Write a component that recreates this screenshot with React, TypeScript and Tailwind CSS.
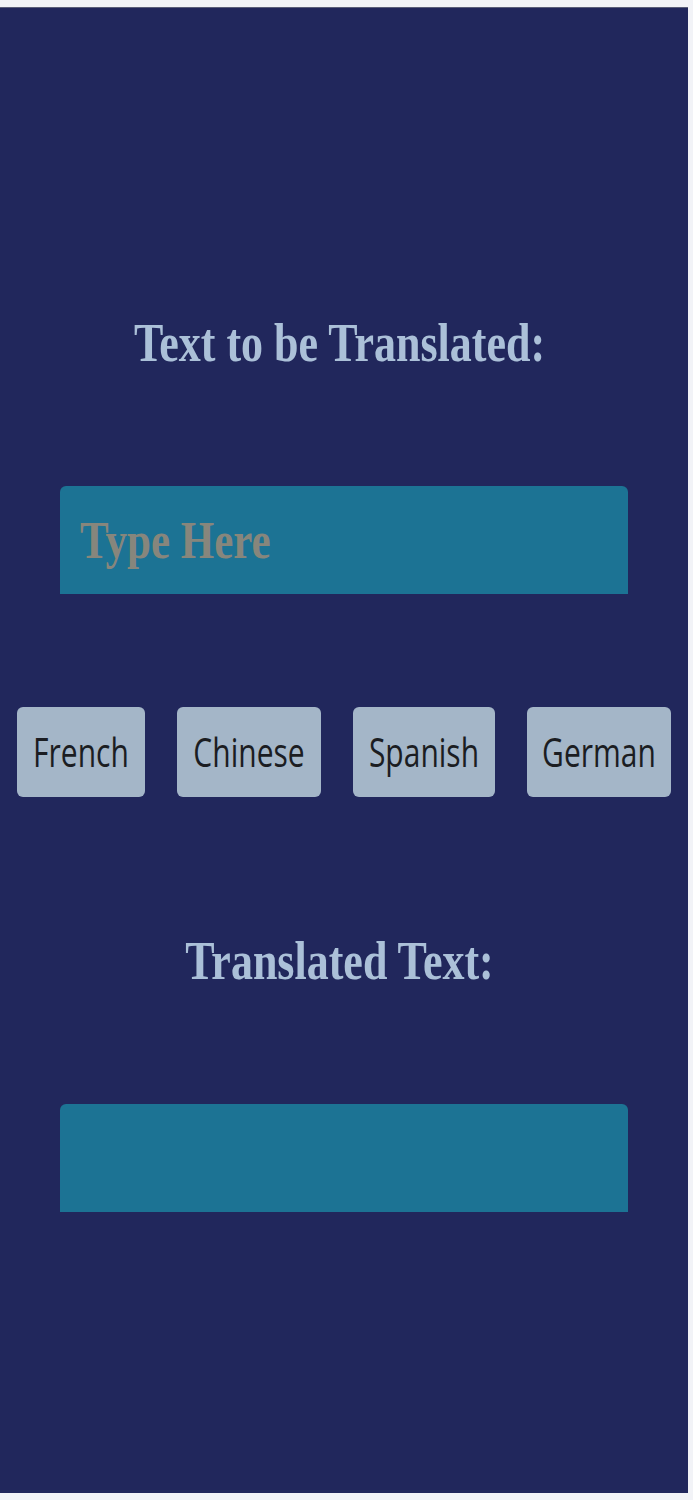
const languages = [
  { name: "French", width: "w-[128px]" },
  { name: "Chinese", width: "w-[144px]" },
  { name: "Spanish", width: "w-[142px]" },
  { name: "German", width: "w-[144px]" },
];

const serif = { fontFamily: '"Liberation Serif", "Times New Roman", serif' };

export default function App() {
  return (
    <div className="min-h-[1500px] w-[693px] bg-[#f2f3f7] pt-[7px]">
      <div className="flex h-[1486px] w-[688px] flex-col items-center bg-[#21275c] pt-[315px] shadow-[inset_0_1px_0_#5a5e78]">
        <h1
          className="h-[44px] w-full pr-[9px] text-center text-[44px] leading-none font-bold text-[#abc0d8]"
          style={serif}
        >
          <span className="inline-block scale-y-[1.24]">Text to be Translated:</span>
        </h1>

        <div className="mt-[120px] flex h-[108px] w-[568px] items-center rounded-t-md bg-[#1c7394] pl-[20px]">
          <span
            className="inline-block h-[43px] scale-y-[1.24] text-[43px] leading-none font-bold text-[#87867c]"
            style={serif}
          >
            Type Here
          </span>
        </div>

        <div className="mt-[113px] flex w-full justify-center gap-[32px]">
          {languages.map((lang) => (
            <button
              key={lang.name}
              className={`flex h-[90px] ${lang.width} items-center justify-center rounded-md bg-[#a4b6c8] text-[30px] leading-none text-[#1b1d22]`}
              style={{ fontFamily: '"Open Sans", "Noto Sans", sans-serif' }}
            >
              <span className="inline-block scale-y-[1.35]">{lang.name}</span>
            </button>
          ))}
        </div>

        <h2
          className="mt-[143px] h-[44px] w-full pr-[9px] text-center text-[44px] leading-none font-bold text-[#abc0d8]"
          style={serif}
        >
          <span className="inline-block scale-y-[1.24]">Translated Text:</span>
        </h2>

        <div className="mt-[120px] h-[108px] w-[568px] rounded-t-md bg-[#1c7394]" />
      </div>
    </div>
  );
}
